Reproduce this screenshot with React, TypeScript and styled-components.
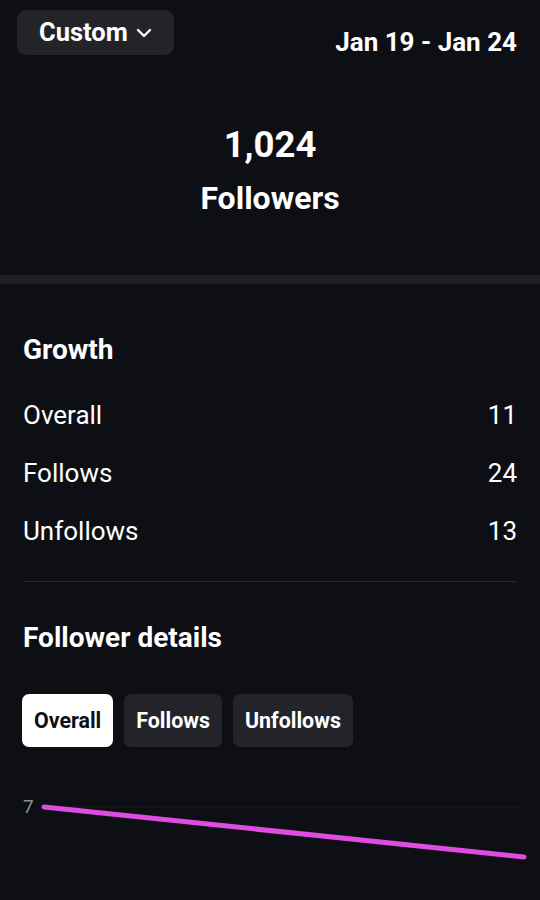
import React from "react";
import styled, { createGlobalStyle } from "styled-components";

const Global = createGlobalStyle`
  html, body { margin: 0; padding: 0; background: #0d0f14; }
  body { font-family: Roboto, "Noto Sans", "Liberation Sans", sans-serif; color: #fff; }
  * { box-sizing: border-box; }
`;

const Page = styled.div`
  width: 540px;
  min-height: 900px;
  background: #0d0f14;
  overflow: hidden;
`;

const Header = styled.header`
  display: flex;
  justify-content: space-between;
  align-items: flex-start;
  height: 74px;
  padding: 10px 23px 0 17px;
`;

const RangeButton = styled.button`
  display: flex;
  align-items: center;
  gap: 8px;
  height: 45px;
  padding: 0 22px;
  border: none;
  border-radius: 9px;
  background: #222429;
  color: #fff;
  font-family: inherit;
  font-weight: 700;
  font-size: 25.5px;
  line-height: 45px;
`;

const DateText = styled.div`
  margin-top: 17px;
  font-weight: 700;
  font-size: 26px;
  line-height: 30px;
`;

const Hero = styled.section`
  display: flex;
  flex-direction: column;
  align-items: center;
  padding-top: 49px;
  height: 201px;
`;

const BigNumber = styled.div`
  font-weight: 700;
  font-size: 36.5px;
  line-height: 44px;
`;

const HeroLabel = styled.div`
  font-weight: 700;
  font-size: 32px;
  line-height: 40px;
  margin-top: 11px;
`;

const ThickDivider = styled.div`
  height: 9px;
  background: #1e2025;
`;

const Section = styled.section`
  padding: 0 23px;
`;

const SectionTitle = styled.h2<{ $top: number }>`
  margin: ${(p) => p.$top}px 0 0;
  font-weight: 700;
  font-size: 28px;
  line-height: 32px;
`;

const Rows = styled.div`
  display: flex;
  flex-direction: column;
  margin-top: 20px;
`;

const Row = styled.div`
  display: flex;
  justify-content: space-between;
  align-items: center;
  height: 58px;
  font-size: 26px;
`;

const ThinDivider = styled.div`
  height: 1px;
  background: #26282d;
  margin-top: 21px;
`;

const Tabs = styled.div`
  display: flex;
  gap: 11px;
  margin-top: 40px;
  margin-left: -1px;
`;

const Tab = styled.button<{ $active?: boolean }>`
  height: 53px;
  padding: 0 12px;
  border: none;
  border-radius: 7px;
  background: ${(p) => (p.$active ? "#ffffff" : "#222429")};
  color: ${(p) => (p.$active ? "#0d0f14" : "#ffffff")};
  font-family: inherit;
  font-weight: 700;
  font-size: 21.4px;
`;

const Chart = styled.div`
  position: relative;
  height: 150px;
  margin-top: 47px;
`;

const AxisLabel = styled.span`
  position: absolute;
  left: 23px;
  top: 3px;
  font-size: 19px;
  line-height: 20px;
  color: #8b8e94;
`;

const ChartSvg = styled.svg`
  position: absolute;
  left: 0;
  top: 0;
`;

export default function App() {
  return (
    <Page>
      <Global />
      <Header>
        <RangeButton>
          Custom
          <svg width="16" height="10" viewBox="0 0 16 10" fill="none">
            <path d="M2 2 L8 8 L14 2" stroke="#fff" strokeWidth="2.4" strokeLinecap="round" strokeLinejoin="round" />
          </svg>
        </RangeButton>
        <DateText>Jan 19 - Jan 24</DateText>
      </Header>
      <Hero>
        <BigNumber>1,024</BigNumber>
        <HeroLabel>Followers</HeroLabel>
      </Hero>
      <ThickDivider />
      <Section>
        <SectionTitle $top={50}>Growth</SectionTitle>
        <Rows>
          <Row><span>Overall</span><span>11</span></Row>
          <Row><span>Follows</span><span>24</span></Row>
          <Row><span>Unfollows</span><span>13</span></Row>
        </Rows>
        <ThinDivider />
        <SectionTitle $top={40}>Follower details</SectionTitle>
        <Tabs>
          <Tab $active>Overall</Tab>
          <Tab>Follows</Tab>
          <Tab>Unfollows</Tab>
        </Tabs>
      </Section>
      <Chart>
        <AxisLabel>7</AxisLabel>
        <ChartSvg width="540" height="150" viewBox="0 0 540 150">
          <line x1="42" y1="13" x2="522" y2="13" stroke="#1c1e23" strokeWidth="1" />
          <line x1="44" y1="13" x2="524" y2="63" stroke="#e04ce0" strokeWidth="5" strokeLinecap="round" />
        </ChartSvg>
      </Chart>
    </Page>
  );
}
